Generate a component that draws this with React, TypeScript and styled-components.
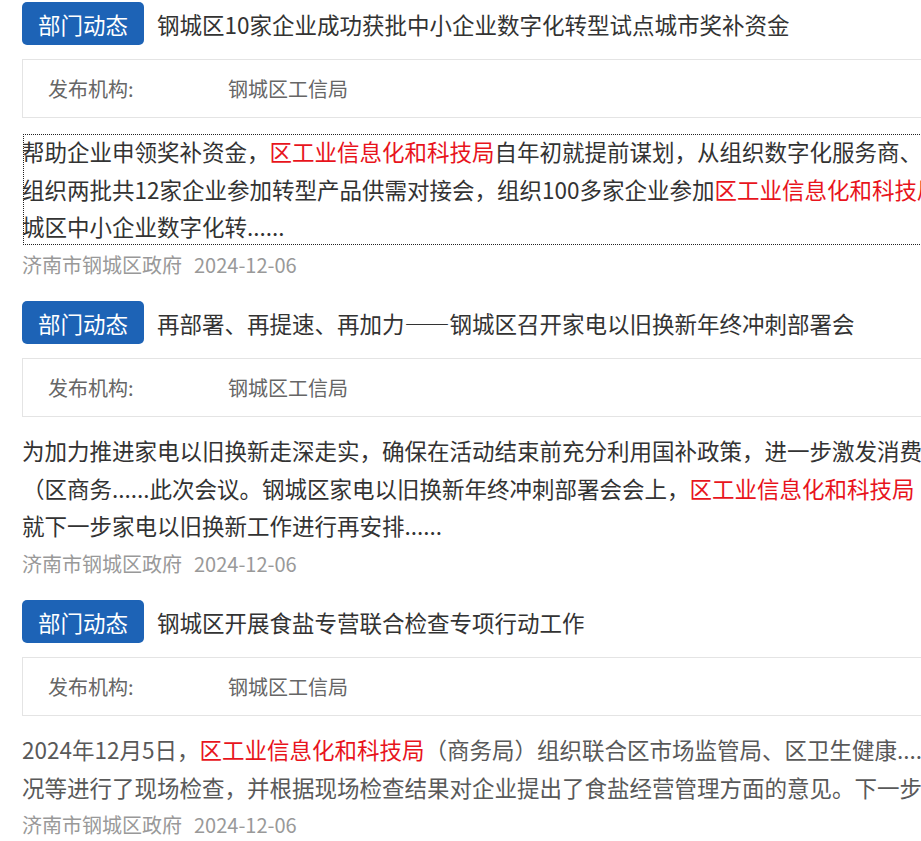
import React from 'react'
import styled, {createGlobalStyle} from 'styled-components'

const GlobalStyle = createGlobalStyle`
  html, body {
    margin: 0;
    padding: 0;
    background: #fff;
    overflow: hidden;
  }
  body {
    font-family: "Noto Sans CJK SC", "Noto Sans", sans-serif;
    color: #333;
  }
`

type Part = { text: string, red?: boolean }

type NewsItem = {
    title: string
    org: string
    parts: Part[]
    source: string
    date: string
    muted?: boolean
    focused?: boolean
}

const RED = '区工业信息化和科技局'

const news: NewsItem[] = [
    {
        title: '钢城区10家企业成功获批中小企业数字化转型试点城市奖补资金',
        org: '钢城区工信局',
        parts: [
            {text: '帮助企业申领奖补资金，'},
            {text: RED, red: true},
            {text: '自年初就提前谋划，从组织数字化服务商、专家团队，组织两批共12家企业参加转型产品供需对接会，组织100多家企业参加'},
            {text: RED, red: true},
            {text: '，助力钢城区中小企业数字化转......'},
        ],
        source: '济南市钢城区政府',
        date: '2024-12-06',
        focused: true,
    },
    {
        title: '再部署、再提速、再加力——钢城区召开家电以旧换新年终冲刺部署会',
        org: '钢城区工信局',
        parts: [
            {text: '为加力推进家电以旧换新走深走实，确保在活动结束前充分利用国补政策，进一步激发消费潜力，日前（区商务......此次会议。钢城区家电以旧换新年终冲刺部署会会上，'},
            {text: RED, red: true},
            {text: '（商务局）就下一步家电以旧换新工作进行再安排......'},
        ],
        source: '济南市钢城区政府',
        date: '2024-12-06',
    },
    {
        title: '钢城区开展食盐专营联合检查专项行动工作',
        org: '钢城区工信局',
        parts: [
            {text: '2024年12月5日，'},
            {text: RED, red: true},
            {text: '（商务局）组织联合区市场监管局、区卫生健康......对经营情况等进行了现场检查，并根据现场检查结果对企业提出了食盐经营管理方面的意见。下一步，持续......'},
        ],
        source: '济南市钢城区政府',
        date: '2024-12-06',
        muted: true,
    },
]

function App() {
    return (
        <Page lang="zh-CN">
            <GlobalStyle/>
            <List>
                {news.map((item, i) => (
                    <Item key={i}>
                        <Header>
                            <Badge>部门动态</Badge>
                            <Title>{item.title}</Title>
                        </Header>
                        <Info>
                            <InfoLabel>发布机构:</InfoLabel>
                            <InfoValue>{item.org}</InfoValue>
                        </Info>
                        <Summary $muted={item.muted} $focused={item.focused}>
                            {item.parts.map((p, j) => p.red
                                ? <Highlight key={j}>{p.text}</Highlight>
                                : <React.Fragment key={j}>{p.text}</React.Fragment>)}
                        </Summary>
                        <Footer>
                            <span>{item.source}</span>
                            <FooterDate>{item.date}</FooterDate>
                        </Footer>
                    </Item>
                ))}
            </List>
        </Page>
    )
}

const Page = styled.div`
  width: 100vw;
  height: 100vh;
  overflow: hidden;
  padding: 2px 0 0 22px;
  box-sizing: border-box;
`

const List = styled.div`
  width: 1013px;
  display: flex;
  flex-direction: column;
  gap: 18px;
`

const Item = styled.div`
  display: flex;
  flex-direction: column;
`

const Header = styled.div`
  display: flex;
  align-items: center;
  gap: 13px;
  height: 43px;
`

const Badge = styled.span`
  display: flex;
  align-items: center;
  justify-content: center;
  width: 122px;
  height: 43px;
  flex-shrink: 0;
  border-radius: 5px;
  background: #1d63b6;
  color: #fff;
  font-size: 22.5px;
`

const Title = styled.span`
  font-size: 22.5px;
  color: #333;
  white-space: nowrap;
`

const Info = styled.div`
  display: flex;
  align-items: center;
  height: 59px;
  margin-top: 14px;
  padding-left: 25px;
  box-sizing: border-box;
  border: 1px solid #e4e4e4;
  font-size: 20px;
  color: #666;
`

const InfoLabel = styled.span`
  width: 180px;
`

const InfoValue = styled.span``

const Summary = styled.div<{ $muted?: boolean, $focused?: boolean }>`
  margin-top: 15px;
  font-size: 22.5px;
  line-height: 37.5px;
  color: ${p => p.$muted ? '#595959' : '#333'};
  outline: ${p => p.$focused ? '1px dotted #222' : 'none'};
  outline-offset: -2px;
`

const Highlight = styled.span`
  color: #e8141c;
`

const Footer = styled.div`
  font-size: 20px;
  line-height: 37.5px;
  color: #999;
`

const FooterDate = styled.span`
  margin-left: 12px;
`

export default App
